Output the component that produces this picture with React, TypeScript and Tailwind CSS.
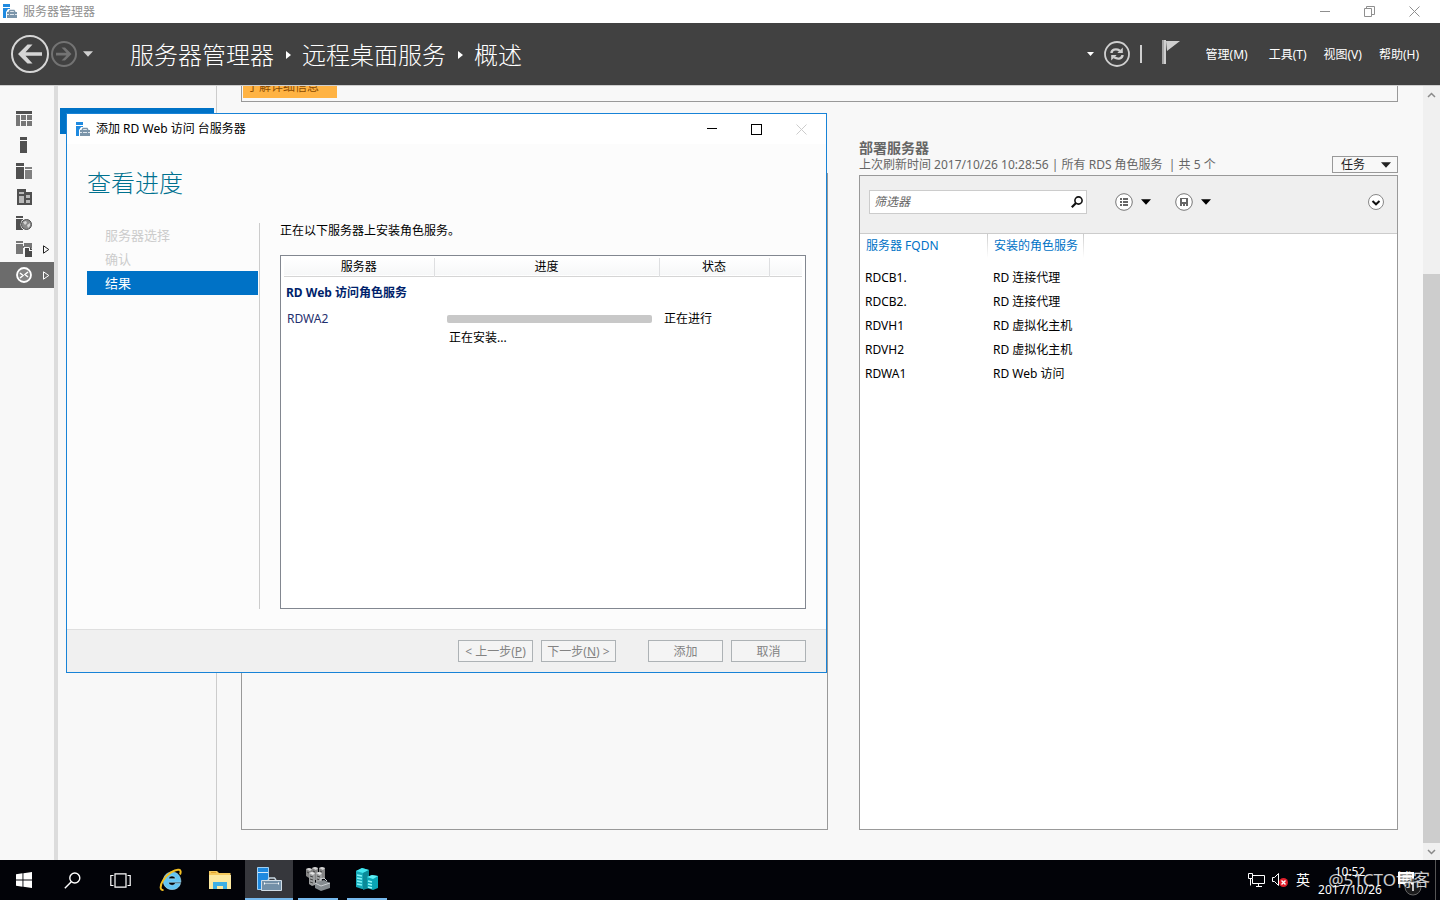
import type { ReactNode } from "react";

const servers = [
  { name: "RDCB1.", role: "RD 连接代理" },
  { name: "RDCB2.", role: "RD 连接代理" },
  { name: "RDVH1", role: "RD 虚拟化主机" },
  { name: "RDVH2", role: "RD 虚拟化主机" },
  { name: "RDWA1", role: "RD Web 访问" },
];

function ServerLogo() {
  return (
    <svg width="15" height="15" viewBox="0 0 15 15" aria-hidden="true">
      <path d="M0 0h7v3H0zM0 4h7v1H5L3 8v6H0z" fill="#1f8ae0" />
      <path d="M4 8h10v6H4z" fill="#7b95aa" />
      <path d="M6 8l1-1.500h4L12 8" fill="none" stroke="#7b95aa" strokeWidth="1.400" />
      <path d="M4 10.500h2M12 10.500h2M7 10.500h4" fill="none" stroke="#dfe7ee" />
    </svg>
  );
}

function Caret({ className = "" }: { className?: string }) {
  return (
    <svg width="10" height="6" viewBox="0 0 11 6" className={className} aria-hidden="true">
      <path d="M0 0h11L5.500 6z" fill="currentColor" />
    </svg>
  );
}

function Crumb() {
  return (
    <svg width="6" height="8" viewBox="0 0 6 8" className="mx-[11px]" aria-hidden="true">
      <path d="M1 0l5 4-5 4z" fill="#fff" />
    </svg>
  );
}

function CloseIcon() {
  return (
    <svg width="11" height="11" viewBox="0 0 11 11" aria-hidden="true">
      <path d="M.5.5l10 10M10.500.5l-10 10" stroke="currentColor" fill="none" />
    </svg>
  );
}

function MinimizeIcon() {
  return (
    <svg width="10" height="10" viewBox="0 0 10 10" aria-hidden="true">
      <path d="M0 4.500h10" stroke="currentColor" />
    </svg>
  );
}

function WindowButton({ label, children }: { label: string; children: ReactNode }) {
  return (
    <button aria-label={label} className="w-[45px] h-full flex items-center justify-center">
      {children}
    </button>
  );
}

function TitleBar() {
  return (
    <div className="h-[23px] shrink-0 bg-white flex items-center pl-[3px] pr-[3px] text-[#8f8f8f]">
      <ServerLogo />
      <span className="ml-[5px] flex-1">服务器管理器</span>
      <WindowButton label="最小化"><MinimizeIcon /></WindowButton>
      <WindowButton label="还原">
        <svg width="11" height="11" viewBox="0 0 11 11" fill="none" stroke="currentColor">
          <path d="M.5 2.500h7v8h-7zM2.500 2V.5h8v8H8" />
        </svg>
      </WindowButton>
      <WindowButton label="关闭"><CloseIcon /></WindowButton>
    </div>
  );
}

function Header() {
  return (
    <header className="h-[62px] shrink-0 bg-[#414141] text-white flex items-center pl-[11px] pr-[21px]">
      <button aria-label="后退">
        <svg width="38" height="38" viewBox="0 0 38 38" fill="none">
          <circle cx="19" cy="19" r="18" stroke="#d6d6d6" strokeWidth="2" />
          <path d="M31 17.200v3.600H14.500l7 7.700h-5L7 19l9.500-9.500h5l-7 7.700z" fill="#d6d6d6" />
        </svg>
      </button>
      <button aria-label="前进" className="ml-0.5">
        <svg width="26" height="26" viewBox="0 0 26 26" fill="none">
          <circle cx="13" cy="13" r="12" stroke="#737373" strokeWidth="2" />
          <path d="M5 11.800v2.600h10.500l-5 5.100H14l6.500-6.500L14 6.500h-3.500l5 5.300z" fill="#737373" />
        </svg>
      </button>
      <button aria-label="历史记录" className="ml-1.5">
        <Caret className="text-[#d0d0d0]" />
      </button>
      <nav className="ml-[37px] pt-0.5 flex items-center text-2xl font-light whitespace-nowrap">
        <a href="#">服务器管理器</a>
        <Crumb />
        <a href="#">远程桌面服务</a>
        <Crumb />
        <a href="#">概述</a>
      </nav>
      <div className="flex-1" />
      <button aria-label="刷新选项">
        <svg width="7" height="4" viewBox="0 0 7 4"><path d="M0 0h7L3.500 4z" fill="#fff" /></svg>
      </button>
      <button aria-label="刷新" className="ml-2.5">
        <svg width="26" height="26" viewBox="0 0 26 26" fill="none" stroke="#d0d0d0">
          <circle cx="13" cy="13" r="12" strokeWidth="1.800" />
          <path d="M7.500 12c0-3 4-5 8.500-2.300M18.500 14c0 3-4 5-8.500 2.300" strokeWidth="2.400" />
          <path d="M18.800 6.500v5.500h-5.500zM7.200 19.500V14h5.500z" fill="#d0d0d0" stroke="none" />
        </svg>
      </button>
      <div className="ml-2.5 w-0.5 h-[18px] bg-[#cfcfcf]" />
      <button aria-label="通知" className="ml-5 mb-1">
        <svg width="18" height="24" viewBox="0 0 18 24">
          <path d="M0 0h2v24H0z" fill="#a5a5a5" />
          <path d="M2 0h2v24H2zM4 1h14L5 11z" fill="#cfcfcf" />
        </svg>
      </button>
      <nav className="ml-[26px] pt-0.5 flex gap-[17px] whitespace-nowrap">
        <button className="mr-1">管理(M)</button>
        <button>工具(T)</button>
        <button>视图(V)</button>
        <button>帮助(H)</button>
      </nav>
    </header>
  );
}

const sideIcons: { label: string; arrow?: boolean; icon: ReactNode }[] = [
  {
    label: "仪表板",
    icon: <><path d="M0 0h16v3H0z" fill="#4f4f4f" /><path d="M0 4h4v11H0zM5 4h5v5H5zM11 4h5v5h-5zM5 10h5v5H5zM11 10h5v5h-5z" fill="#777" /></>,
  },
  { label: "本地服务器", icon: <path d="M4 0h7v3H4zM4 4h7v12H4z" fill="#505050" /> },
  {
    label: "所有服务器",
    icon: <><path d="M0 0h8v3H0zM0 4h8v12H0z" fill="#505050" /><path d="M9 4h7v2H9zM9 7h7v9H9z" fill="#808080" /></>,
  },
  {
    label: "AD DS",
    icon: <><path d="M1 0h9v3h6v13H1z" fill="#505050" /><path d="M3 3h5v2H3zM3 7h5v7H3zM10 6h4v3h-4zM10 11h4v3h-4z" fill="#b8b8b8" /></>,
  },
  {
    label: "DNS",
    icon: (
      <>
        <path d="M0 1h7v2H0zM0 4h7v11H0z" fill="#505050" />
        <circle cx="10.500" cy="9.500" r="6" fill="#f8f8f8" />
        <circle cx="10.500" cy="9.500" r="5" fill="#8a8a8a" stroke="#505050" />
        <path d="M7 7l3-1 1 2-2 2zM11 10l3-2v3l-2 2z" fill="#d5d5d5" />
      </>
    ),
  },
  {
    label: "文件和存储服务",
    arrow: true,
    icon: <><path d="M0 0h7v2H0zM0 3h7v10H0zM8 2h8v3H8zM7 5h9v2H7z" fill="#777" /><path d="M8 6h5l4 4v6H8z" fill="#f8f8f8" /><path d="M9 7h4v3h3v6H9z" fill="#4a4a4a" /><path d="M14 6l2 2v1h-2z" fill="#4a4a4a" /></>,
  },
  {
    label: "远程桌面服务",
    arrow: true,
    icon: <><circle cx="8" cy="8" r="7" fill="#858585" stroke="#fff" strokeWidth="1.800" /><path d="M4 6l3 2.500L4 11M12 5L9 7.500l3 2.500" fill="none" stroke="#fff" strokeWidth="1.500" /></>,
  },
];

function Sidebar() {
  return (
    <nav className="w-[58px] shrink-0 pt-5 border-r-4 border-[#dcdcdc]">
      {sideIcons.map((item, i) => (
        <button
          key={item.label}
          aria-label={item.label}
          className={`w-full h-[26px] flex items-center pl-4 ${i === 6 ? "bg-[#6c6c6c] text-white" : "text-[#222]"}`}
        >
          <svg width="17" height="16" viewBox="0 0 17 16">{item.icon}</svg>
          {item.arrow && (
            <svg width="7" height="9" viewBox="0 0 7 9" className="ml-2.5">
              <path d="M.5.8v7.400L5.800 4.500z" fill="none" stroke="currentColor" />
            </svg>
          )}
        </button>
      ))}
    </nav>
  );
}

function DeploymentServers() {
  return (
    <section className="flex flex-col">
      <h2 className="text-sm leading-4 font-bold text-[#666]">部署服务器</h2>
      <div className="flex justify-between items-start h-[19px]">
        <p className="leading-[18px] text-[#666] whitespace-pre">上次刷新时间 2017/10/26 10:28:56 | 所有 RDS 角色服务  | 共 5 个</p>
        <button className="h-[17px] w-[66px] border border-[#999] flex items-center justify-between pl-2 pr-1.5 text-[#222]">
          任务
          <Caret />
        </button>
      </div>
      <div className="flex-1 border border-[#999] bg-white">
        <div className="h-[58px] bg-[#efefef] border-b border-[#ccc] flex items-center pl-[9px] pr-3 pb-1.5">
          <label className="w-[218px] h-6 border border-[#ccc] bg-white flex items-center pl-1 pr-[3px]">
            <input
              aria-label="筛选器"
              placeholder="筛选器"
              className="flex-1 min-w-0 italic outline-none placeholder:text-[#666]"
            />
            <svg width="12" height="12" viewBox="0 0 12 12" fill="none" stroke="#111">
              <circle cx="7.500" cy="4.500" r="3.600" strokeWidth="1.600" />
              <path d="M5 7L.8 11.200" strokeWidth="2.200" />
            </svg>
          </label>
          <button aria-label="视图选项" className="ml-7 flex items-center gap-2">
            <svg width="18" height="18" viewBox="0 0 18 18">
              <circle cx="9" cy="9" r="8.300" fill="#fff" stroke="#777" />
              <path d="M5 5h2v2H5zM8 5h5v2H8zM5 8h2v2H5zM8 8h5v2H8zM5 11h2v2H5zM8 11h5v2H8z" fill="#666" />
            </svg>
            <Caret />
          </button>
          <button aria-label="保存查询" className="ml-6 flex items-center gap-2">
            <svg width="18" height="18" viewBox="0 0 18 18">
              <circle cx="9" cy="9" r="8.300" fill="#fff" stroke="#777" />
              <path d="M5 5h8v8H5z" fill="#666" />
              <path d="M7 6h4v3H7zM7 11h1v2H7zM10 11h1v2h-1z" fill="#fff" />
            </svg>
            <Caret />
          </button>
          <button aria-label="展开" className="ml-auto">
            <svg width="18" height="18" viewBox="0 0 18 18" fill="none">
              <circle cx="9" cy="9" r="7.500" fill="#fff" stroke="#888" />
              <path d="M5.500 8L9 11.300 12.500 8" stroke="#111" strokeWidth="2" />
            </svg>
          </button>
        </div>
        <table className="text-left whitespace-nowrap">
          <thead>
            <tr className="text-[#0072c6]">
              <th className="w-32 h-6 pl-1.5 font-normal bg-[linear-gradient(#ccc,#fff)] bg-no-repeat bg-right bg-[length:1px_100%]">服务器 FQDN</th>
              <th className="w-24 h-6 pl-1.5 font-normal bg-[linear-gradient(#ccc,#fff)] bg-no-repeat bg-right bg-[length:1px_100%]">安装的角色服务</th>
            </tr>
            <tr><td className="h-2" /></tr>
          </thead>
          <tbody>
            {servers.map((s) => (
              <tr key={s.name}>
                <td className="h-6 pl-[5px]">{s.name}</td>
                <td className="h-6 pl-[5px]">{s.role}</td>
              </tr>
            ))}
          </tbody>
        </table>
      </div>
    </section>
  );
}

function InstallDialog() {
  return (
    <div
      role="dialog"
      aria-label="添加 RD Web 访问 台服务器"
      className="absolute left-[66px] top-[27px] w-[761px] h-[560px] border border-[#1883d7] bg-[#fcfcfc] flex flex-col"
    >
      <div className="h-[30px] bg-white flex items-center pl-[9px] pr-0.5">
        <ServerLogo />
        <span className="flex-1 ml-[5px]">添加 RD Web 访问 台服务器</span>
        <WindowButton label="最小化"><MinimizeIcon /></WindowButton>
        <WindowButton label="最大化">
          <span className="w-[11px] h-[11px] border border-black" />
        </WindowButton>
        <span className="text-[#ccc] h-full"><WindowButton label="关闭"><CloseIcon /></WindowButton></span>
      </div>
      <h1 className="mt-[23px] ml-5 text-2xl leading-8 font-light text-[#00718f]">查看进度</h1>
      <div className="flex-1 flex mt-6 mb-5 ml-5 mr-5">
        <ul className="w-[173px] pr-px border-r border-[#ccc] text-[13px] text-[#ccc]">
          <li className="h-6 pl-[18px] pt-px flex items-center">服务器选择</li>
          <li className="h-6 pl-[18px] pt-px flex items-center">确认</li>
          <li className="h-6 pl-[18px] pt-px flex items-center bg-[#0072c6] text-white">结果</li>
        </ul>
        <div className="flex-1 ml-5 flex flex-col">
          <p className="leading-4 mb-4">正在以下服务器上安装角色服务。</p>
          <div className="flex-1 border border-[#828790] bg-white px-[3px] pt-0.5">
            <table className="w-full table-fixed">
              <thead>
                <tr className="bg-[linear-gradient(#fff,#f6f7f8)] border-b border-[#d5d5d5]">
                  <th className="h-[18px] w-[150px] font-normal border-r border-[#dedfe1]">服务器</th>
                  <th className="w-[225px] font-normal border-r border-[#dedfe1]">进度</th>
                  <th className="w-[110px] font-normal border-r border-[#dedfe1]">状态</th>
                  <th />
                </tr>
              </thead>
              <tbody>
                <tr>
                  <td colSpan={4} className="h-[33px] pl-0.5 font-bold text-[#001f6b]">RD Web 访问角色服务</td>
                </tr>
                <tr className="align-top">
                  <td className="pl-[3px] leading-5 text-[#1f2f6e]">RDWA2</td>
                  <td className="pl-[13px] pr-[7px]">
                    <div role="progressbar" aria-label="安装进度" className="mt-1.5 h-2 rounded-xs bg-[#c8c8c8]" />
                    <p className="pl-0.5 mt-1.5 leading-[18px]">正在安装...</p>
                  </td>
                  <td className="pl-[5px] leading-5">正在进行</td>
                  <td />
                </tr>
              </tbody>
            </table>
          </div>
        </div>
      </div>
      <div className="h-[43px] border-t border-[#dfdfdf] bg-[#f0f0f0] flex items-center justify-end gap-2 pr-5 text-[#838383] whitespace-nowrap">
        <button className="w-[75px] h-[22px] pt-px border border-[#adb2b5] bg-[#f4f4f4]">&lt; 上一步(<u>P</u>)</button>
        <button className="w-[75px] h-[22px] pt-px border border-[#adb2b5] bg-[#f4f4f4]">下一步(<u>N</u>) &gt;</button>
        <button className="w-[75px] h-[22px] pt-px ml-6 border border-[#adb2b5] bg-[#f4f4f4]">添加</button>
        <button className="w-[75px] h-[22px] pt-px border border-[#adb2b5] bg-[#f4f4f4]">取消</button>
      </div>
    </div>
  );
}

function Scrollbar() {
  return (
    <div className="w-[17px] shrink-0 bg-[#f0f0f0] flex flex-col items-center text-[#8a8a8a]">
      <svg width="9" height="17" viewBox="0 0 9 17" fill="none" stroke="currentColor" strokeWidth="1.500"><path d="M1 11l3.500-3.500L8 11" /></svg>
      <div className="grow-[171]" />
      <div className="w-full grow-[569] bg-[#cdcdcd]" />
      <svg width="9" height="17" viewBox="0 0 9 17" fill="none" stroke="currentColor" strokeWidth="1.500"><path d="M1 7l3.500 3.500L8 7" /></svg>
    </div>
  );
}

function Taskbar() {
  return (
    <footer className="relative h-10 shrink-0 bg-[#020308] text-white flex items-center">
      <button aria-label="开始" className="w-12 h-full flex items-center justify-center">
        <svg width="16" height="16" viewBox="0 0 16 16" fill="#fff">
          <path d="M0 2.200L6.500 1.300v6.200H0zM7.400 1.200L16 0v7.500H7.400zM0 8.400h6.500v6.300L0 13.800zM7.400 8.400H16V16l-8.600-1.200z" />
        </svg>
      </button>
      <button aria-label="搜索" className="w-12 h-full flex items-center justify-center">
        <svg width="17" height="17" viewBox="0 0 17 17" fill="none" stroke="#fff" strokeWidth="1.400">
          <circle cx="10.800" cy="6" r="5" />
          <path d="M7.300 9.700L.8 16.200" />
        </svg>
      </button>
      <button aria-label="任务视图" className="w-12 h-full flex items-center justify-center">
        <svg width="21" height="15" viewBox="0 0 21 15" fill="none" stroke="#fff" strokeWidth="1.200">
          <path d="M5 .8h11v13.400H5zM3.500 2.500H.8v10h2.700M17.500 2.500h2.700v10h-2.700" />
        </svg>
      </button>
      <button aria-label="Internet Explorer" className="w-[51px] h-full flex items-center justify-center pl-0.5">
        <svg width="24" height="24" viewBox="0 0 24 24" fill="none">
          <path d="M21.500 15.500c-1.300 4-4.300 6-8.500 6-5 0-8.700-3.600-8.700-8.600 0-5 3.800-8.900 8.700-8.900 5.500 0 8.900 4 8.900 10.300H9.500c.3 2 1.700 3 3.600 3 1.400 0 2.400-.6 3-1.800zM9.500 10.800h7c-.3-1.900-1.600-2.900-3.500-2.900-1.800 0-3.100 1-3.500 2.900z" fill="#63c5f3" stroke="#aee5fb" strokeWidth=".6" />
          <path d="M4.500 22C1 22.500.5 18 4 12.500 8 6 16 1 20 1.800c2 .4 2 2.500 1 4.700" stroke="#f3bf23" strokeWidth="2" />
        </svg>
      </button>
      <button aria-label="文件资源管理器" className="w-12 h-full flex items-center justify-center pl-0.5">
        <svg width="22" height="19" viewBox="0 0 22 19">
          <path d="M0 0h8l2 2h11.500v16H0z" fill="#f5c95c" />
          <path d="M0 4h22v14H0z" fill="#fde9a0" />
          <path d="M4 11h14v7h-4v-3H8v3H4z" fill="#3fb0e5" />
          <path d="M2 1.500h5" stroke="#e2a52d" />
        </svg>
      </button>
      <button aria-label="服务器管理器" className="w-12 h-full ml-0.5 bg-[#36373c] border-b-2 border-[#76b9ed] flex items-center justify-center">
        <svg width="25" height="24" viewBox="0 0 25 24">
          <path d="M.5.500h11v22H.5z" fill="#1f8ae0" stroke="#9fd0f5" />
          <path d="M1 5.500h10" stroke="#d6ebfb" />
          <path d="M11 13l1.500-2h5l1.500 2" fill="none" stroke="#c8d6e0" strokeWidth="1.500" />
          <path d="M4.500 13.500h20v10h-20z" fill="#7390a8" stroke="#d1dde6" />
          <path d="M7 16.500h15" stroke="#b4c4d1" />
          <path d="M7.500 15.500v2M21.500 15.500v2" stroke="#fff" />
        </svg>
      </button>
      <button aria-label="故障转移群集管理器" className="w-10 h-full ml-[5px] border-b-2 border-[#76b9ed] flex items-center justify-center">
        <svg width="25" height="24" viewBox="0 0 25 24">
          <path d="M0 2l3-1 3 1v8l-3 1-3-2zM6 1l3-1 3 1v12H6zM13 1l3-1 3 1v11h-6z" fill="#858585" />
          <path d="M0 2l3-1 3 1-2 2zM6 1l3-1 3 1-2 2zM13 1l3-1 3 1-2 2z" fill="#d5d5d5" />
          <path d="M3 6l3-1 3 1v12l-3 1-3-2zM10 6l3-1 3 1v12h-6z" fill="#9b9d9e" />
          <path d="M3 6l3-1 3 1-2 2zM10 6l3-1 3 1-2 2z" fill="#e5e5e5" />
          <path d="M1 5l2 1M7 4l2 1M14 4l2 1M4 9l3 1M11 9l3 1M4 12l3 1M11 12l3 1M4 15l3 1" stroke="#444" />
          <path d="M9 16l9-3 6 3v5l-9 3-6-3z" fill="#858b8f" />
          <path d="M9 16l6 3 9-3M14 14v-2l4-1 3 3" fill="none" stroke="#cdd1d4" />
        </svg>
      </button>
      <button aria-label="虚拟机管理器" className="w-10 h-full ml-[9px] border-b-2 border-[#76b9ed] flex items-center justify-center">
        <svg width="23" height="24" viewBox="0 0 23 24">
          <path d="M0 4l6-3 7 2v18l-7 1-6-2z" fill="#16a9b8" />
          <path d="M0 4l6-3 7 2-6 3z" fill="#43e6ee" />
          <path d="M7 6l6-3v18l-6 2z" fill="#0b8a98" />
          <path d="M1 8l5 1M1 11l5 1M1 14l5 1M1 17l5 1" stroke="#7ff5f8" strokeWidth="1.400" />
          <path d="M11 10l5-2 6 1v12l-5 2-6-2z" fill="#0aa5b5" />
          <path d="M11 10l5-2 6 1-5 3z" fill="#5ff0f5" />
          <path d="M12 14l4 1M12 17l4 1M12 20l4 1" stroke="#8ff8fa" strokeWidth="1.400" />
        </svg>
      </button>
      <div className="ml-auto flex items-center pr-[18px]">
        <svg width="17" height="14" viewBox="0 0 17 14" fill="none" stroke="#fff" role="img" aria-label="网络">
          <path d="M5 2.500h11.500v8H4.500V6M.5.500h4v5h-4zM2.500 5.500v7M8 13.500h6M10.500 11v2" />
        </svg>
        <svg width="17" height="14" viewBox="0 0 17 14" fill="none" className="ml-[7px]" role="img" aria-label="音量">
          <path d="M.5 4.500h2l4-4v12l-4-4h-2z" stroke="#fff" />
          <circle cx="11.500" cy="9.500" r="4.500" fill="#e0202c" />
          <path d="M9.500 7.500l4 4M13.500 7.500l-4 4" stroke="#fff" strokeWidth="1.400" />
        </svg>
        <span className="ml-[7px] text-sm">英</span>
        <div className="ml-1.5 w-[68px] text-center leading-[18px] pt-px">
          <div>10:52</div>
          <div>2017/10/26</div>
        </div>
        <svg width="28" height="28" viewBox="0 0 28 28" className="ml-2.5 mt-2" role="img" aria-label="通知">
          <path d="M4 2h16v12h-6l-3 3v-3H4z" fill="#fff" />
          <path d="M6 5h12M6 8h12M6 11h8" stroke="#222" />
          <circle cx="19" cy="17" r="8" fill="#222c" stroke="#666" />
          <path d="M17 14l2-1v8" fill="none" stroke="#fff" strokeWidth="1.500" />
        </svg>
      </div>
      <div className="absolute right-1 inset-y-0 w-px bg-[#555]" />
      <span className="absolute right-[10px] top-2 text-[17px] leading-6 text-white/80">@51CTO博客</span>
    </footer>
  );
}

export default function App() {
  return (
    <div className="min-h-screen flex flex-col bg-[#f8f8f8] text-black text-xs font-['Noto_Sans','Noto_Sans_CJK_SC',sans-serif]">
      <TitleBar />
      <Header />
      <div className="relative flex-1 flex border-t border-[#cfcfcf]">
        <Sidebar />
        <div className="w-[159px] shrink-0 border-r border-[#ccc] pt-[22px] pl-0.5 pr-0.5">
          <div className="h-[26px] bg-[#0072c6]" />
        </div>
        <main className="flex-1 min-w-0 flex flex-col pl-6 pr-[25px] pb-[30px]">
          <div className="h-4 border border-t-0 border-[#999] pl-px">
            <div className="w-[94px] h-3 overflow-hidden bg-[#ffb343] flex items-end text-[#8a4a00]">
              <a href="#" className="pl-1 leading-[22px] text-xs">了解详细信息</a>
            </div>
          </div>
          <div className="flex-1 grid grid-cols-[587fr_539fr] gap-[31px] pt-[38px]">
            <div className="mt-[33px] border border-[#999]" />
            <DeploymentServers />
          </div>
        </main>
        <Scrollbar />
        <InstallDialog />
      </div>
      <Taskbar />
    </div>
  );
}
